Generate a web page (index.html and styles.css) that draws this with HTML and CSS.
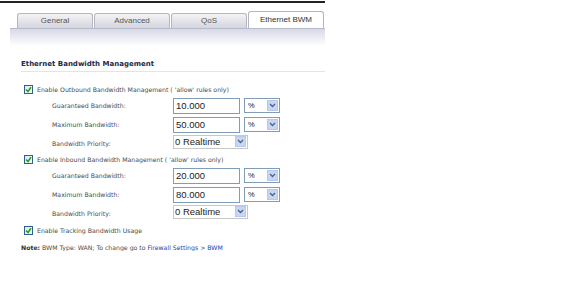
FILE: index.html
```html
<!DOCTYPE html>
<html>
<head>
<meta charset="utf-8">
<link rel="stylesheet" href="styles.css">
</head>
<body>
<div class="page">
  <div class="topline"></div>
  <div class="tabs">
    <div class="tab">General</div>
    <div class="tab">Advanced</div>
    <div class="tab">QoS</div>
    <div class="tab active">Ethernet BWM</div>
  </div>
  <div class="band"></div>
  <div class="content">
    <div class="heading">Ethernet Bandwidth Management</div>

    <div class="check-row">
      <span class="cb"><svg width="7" height="7" viewBox="0 0 7 7"><path d="M1 3.5 L3 5.5 L6 1.2" fill="none" stroke="#21a121" stroke-width="1.6"/></svg></span>
      <span>Enable Outbound Bandwidth Management ( 'allow' rules only)</span>
    </div>
    <div class="field-row">
      <span class="label">Guaranteed Bandwidth:</span>
      <span class="input">10.000</span>
      <span class="select unit"><span class="val">%</span><span class="arrow"><svg width="7" height="5" viewBox="0 0 7 5"><path d="M1 1 L3.5 3.5 L6 1" fill="none" stroke="#4d6185" stroke-width="1.3"/></svg></span></span>
    </div>
    <div class="field-row">
      <span class="label">Maximum Bandwidth:</span>
      <span class="input">50.000</span>
      <span class="select unit"><span class="val">%</span><span class="arrow"><svg width="7" height="5" viewBox="0 0 7 5"><path d="M1 1 L3.5 3.5 L6 1" fill="none" stroke="#4d6185" stroke-width="1.3"/></svg></span></span>
    </div>
    <div class="field-row prio">
      <span class="label">Bandwidth Priority:</span>
      <span class="select priority"><span class="val">0 Realtime</span><span class="arrow"><svg width="7" height="5" viewBox="0 0 7 5"><path d="M1 1 L3.5 3.5 L6 1" fill="none" stroke="#4d6185" stroke-width="1.3"/></svg></span></span>
    </div>

    <div class="check-row after">
      <span class="cb"><svg width="7" height="7" viewBox="0 0 7 7"><path d="M1 3.5 L3 5.5 L6 1.2" fill="none" stroke="#21a121" stroke-width="1.6"/></svg></span>
      <span>Enable Inbound Bandwidth Management ( 'allow' rules only)</span>
    </div>
    <div class="field-row">
      <span class="label">Guaranteed Bandwidth:</span>
      <span class="input">20.000</span>
      <span class="select unit"><span class="val">%</span><span class="arrow"><svg width="7" height="5" viewBox="0 0 7 5"><path d="M1 1 L3.5 3.5 L6 1" fill="none" stroke="#4d6185" stroke-width="1.3"/></svg></span></span>
    </div>
    <div class="field-row">
      <span class="label">Maximum Bandwidth:</span>
      <span class="input">80.000</span>
      <span class="select unit"><span class="val">%</span><span class="arrow"><svg width="7" height="5" viewBox="0 0 7 5"><path d="M1 1 L3.5 3.5 L6 1" fill="none" stroke="#4d6185" stroke-width="1.3"/></svg></span></span>
    </div>
    <div class="field-row prio">
      <span class="label">Bandwidth Priority:</span>
      <span class="select priority"><span class="val">0 Realtime</span><span class="arrow"><svg width="7" height="5" viewBox="0 0 7 5"><path d="M1 1 L3.5 3.5 L6 1" fill="none" stroke="#4d6185" stroke-width="1.3"/></svg></span></span>
    </div>

    <div class="check-row after3">
      <span class="cb"><svg width="7" height="7" viewBox="0 0 7 7"><path d="M1 3.5 L3 5.5 L6 1.2" fill="none" stroke="#21a121" stroke-width="1.6"/></svg></span>
      <span>Enable Tracking Bandwidth Usage</span>
    </div>

    <div class="note"><b>Note:</b> BWM Type: WAN; To change go to <a>Firewall Settings &gt; BWM</a></div>
  </div>
</div>
</body>
</html>
```

FILE: styles.css
```css
* { box-sizing: border-box; }
body {
  margin: 0;
  background: #fff;
  font-family: "DejaVu Sans", Verdana, sans-serif;
  font-size: 6.2px;
  color: #4a4a4a;
}
.page { width: 325px; }
.topline { height: 2px; background: #222; margin-top: 1px; }
.tabs {
  display: flex;
  margin: 9px 0 0 17px;
  height: 16px;
  align-items: flex-end;
}
.tab {
  width: 76px;
  height: 15px;
  margin-right: 1px;
  border: 1px solid #b4b6c0;
  border-bottom: none;
  border-radius: 3px 3px 0 0;
  background: linear-gradient(#f4f4f6, #d4d5de);
  text-align: center;
  line-height: 13px;
  font-family: "Liberation Sans", Arial, sans-serif;
  font-size: 8px;
  color: #555;
}
.tab.active {
  height: 17px;
  background: #fff;
  line-height: 15px;
  color: #333;
}
.band {
  height: 18px;
  margin-left: 10px;
  border-top: 1px solid #b8bbcc;
  background: linear-gradient(#d7d9e6, #fff);
}
.content { padding: 14px 0 0 21px; }
.heading {
  font-family: "DejaVu Sans", Verdana, sans-serif;
  font-weight: bold;
  font-size: 7px;
  color: #1a2a48;
  padding-bottom: 3px;
  border-bottom: 1px solid #e4e4e4;
  margin-bottom: 10px;
}
.check-row {
  display: flex;
  align-items: center;
  gap: 4px;
  padding-left: 3px;
  height: 14px;
}
.check-row.after { margin-top: 3px; }
.check-row.after3 { margin-top: 4px; }
.cb {
  width: 9px;
  height: 9px;
  border: 1px solid #2f5f8e;
  background: linear-gradient(135deg, #dfe4ec, #fff);
  display: flex;
  align-items: center;
  justify-content: center;
}
.field-row {
  display: flex;
  align-items: center;
  height: 19px;
  padding-left: 31px;
}
.field-row.prio { height: 15px; }
.label { width: 121px; }
.prio .label { position: relative; top: 2px; }
.input {
  width: 67px;
  height: 16px;
  border: 1px solid #7f9db9;
  padding-left: 2px;
  font-family: "Liberation Sans", Arial, sans-serif;
  font-size: 9.5px;
  line-height: 14px;
  color: #222;
}
.select {
  display: flex;
  align-items: center;
  justify-content: space-between;
  border: 1px solid #7f9db9;
  height: 15px;
  background: #fff;
  color: #222;
}
.select.unit { width: 36px; margin-left: 4px; }
.select.priority { width: 75px; height: 14px; border-color: #c8c8c8; }
.select .val {
  padding-left: 3px;
  font-family: "Liberation Sans", Arial, sans-serif;
  font-size: 7.5px;
}
.select.priority .val { font-size: 9.5px; padding-left: 1px; }
.arrow {
  width: 11px;
  height: 11px;
  margin-right: 1px;
  background: #c7d6f3;
  border: 1px solid #b7c8ea;
  display: flex;
  align-items: center;
  justify-content: center;
}
.note { margin-top: 7px; }
.note b { font-weight: bold; color: #333; }
.note a { color: #1c3fa8; }
```
